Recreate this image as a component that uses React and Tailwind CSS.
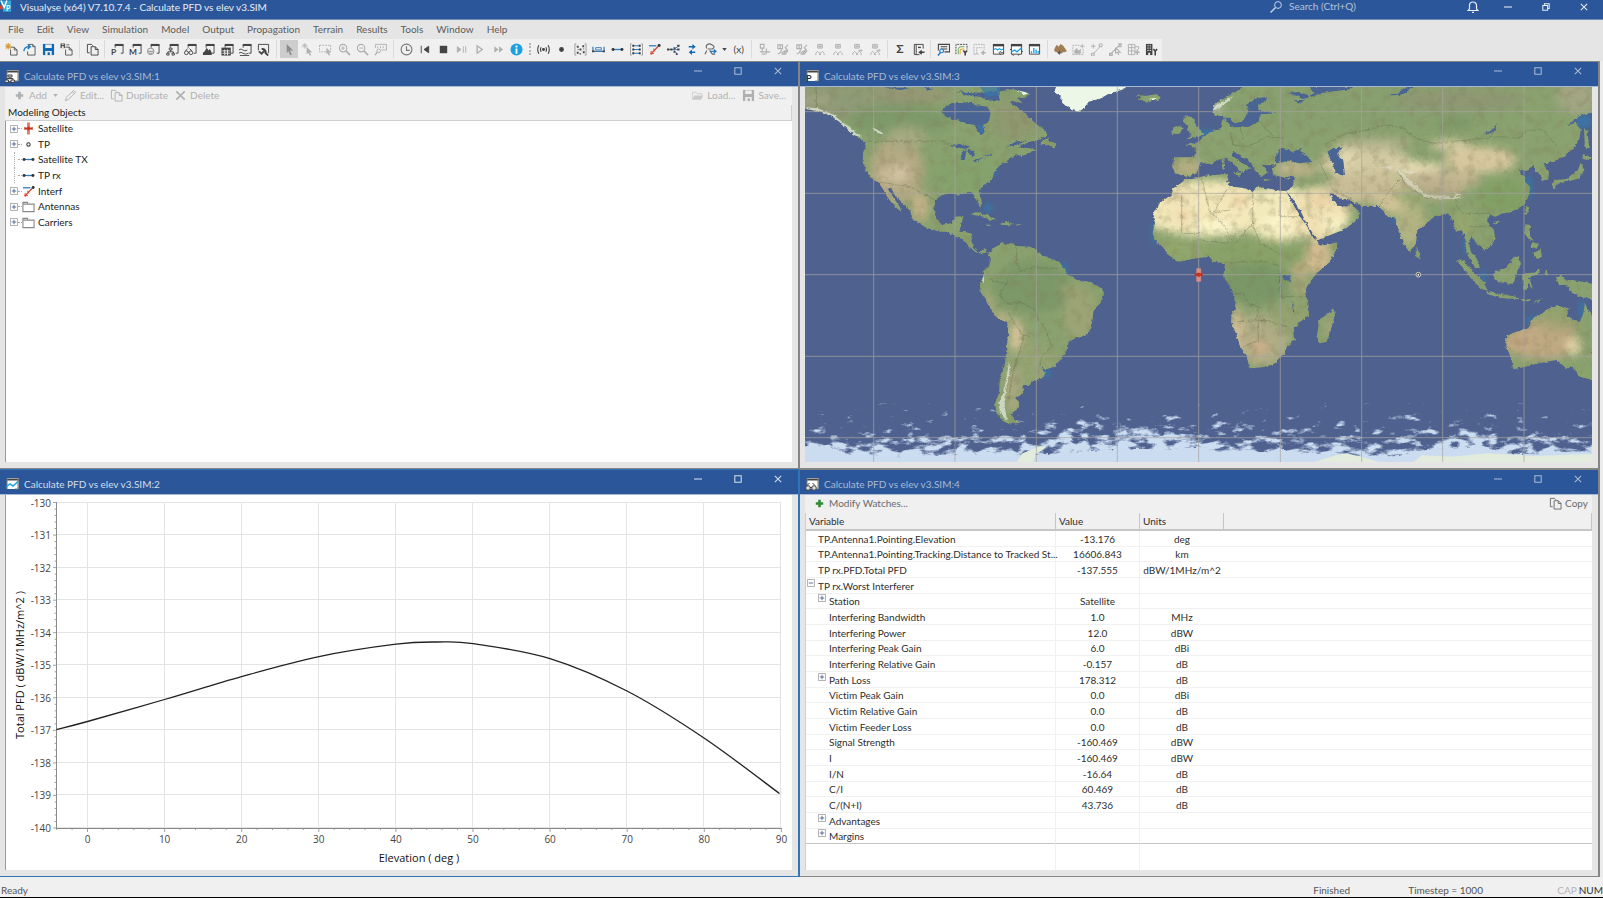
import React from "react";

const MENUS = [
  "File",
  "Edit",
  "View",
  "Simulation",
  "Model",
  "Output",
  "Propagation",
  "Terrain",
  "Results",
  "Tools",
  "Window",
  "Help",
];

/* ---------- Icons (14 x 14 grid) ---------- */

const frame = (
  <>
    <path d="M4.5 5V2.5h8.5v8.5h-2.5" fill="none" stroke="currentColor" />
    <path d="M4 1h9.5v2.2H4z" fill="currentColor" />
  </>
);

const fullFrame = (
  <>
    <path d="M1.5 2.5h11v9.5h-11z" fill="#fff" stroke="#444" />
    <path d="M1 1h12v2.6H1z" fill="#444" />
  </>
);

const people = (
  <g fill="none" stroke="currentColor">
    <path d="M5 1.5h5v4H5zM7.5 1.5v4M5 3.5h5" />
    <path d="M3 13v-2l2-2 2 2v2M8 13v-2l2-2 2 2v2" />
  </g>
);

const satPair = (
  <g fill="none" stroke="currentColor" strokeWidth="1.2">
    <path d="M2 2h5v4H2zM4.500 2v4" />
    <path d="M2 12l3-2 1-3M6 11l4-3M13 2l-3 3 2 2-4 5M13 8l-3 4H6" />
  </g>
);

const pages = (
  <g fill="none" stroke="currentColor">
    <path d="M4 10.500H1.500v-9h4.500l1.500 1.500" />
    <path d="M5.500 4h4.500l3 3v6h-7.500zM10 4v3h3" />
  </g>
);

const floppy = (
  <>
    <path d="M1 1h12v12H1z" fill="currentColor" />
    <path d="M3.500 1.500h7v4h-7zM3.500 8.500h7V13h-7z" fill="#f0f0f0" />
    <path d="M6 10h2.500v3H6z" fill="currentColor" />
  </>
);

const magnifier = (
  <>
    <circle cx="5.500" cy="5.500" r="4" fill="none" stroke="currentColor" strokeWidth="1.2" />
    <path d="M8.500 8.500L13 13" stroke="currentColor" strokeWidth="1.800" />
    <path d="M3.500 5.500h4" stroke="currentColor" />
  </>
);

const ICONS = {
  newFile: (
    <>
      <path d="M6 4.500h4l3 3V13H6V7M10 4.500v3h3" fill="none" stroke="#555" />
      <path d="M3.500 0v7M0 3.500h7M1 1l5 5M6 1L1 6" stroke="#d99a35" strokeWidth="1.100" />
    </>
  ),
  open: (
    <>
      <path d="M6 5.500V1.500h4.500l2.500 2.500v9H5V9M10.500 1.500V4H13" fill="none" stroke="#555" />
      <path d="M1 9C1 5 3 4 7 4M5 1.500L8 4 5 6.500" fill="none" stroke="#1f7bc4" strokeWidth="1.400" />
    </>
  ),
  save: <g className="text-[#0f68b4]">{floppy}</g>,
  saveAs: (
    <>
      <path d="M6 4.500h4l3 3V13H6V7M10 4.500v3h3" fill="none" stroke="#555" />
      <path d="M.5.5h5v5h-5z" fill="#555" />
      <path d="M2 3.500h2v2H2zM2 1h2v1H2z" fill="#f0f0f0" />
      <path d="M7 2h3" stroke="#555" />
    </>
  ),
  copy: pages,
  winP: (
    <>
      {frame}
      <text x="0" y="13" fontSize="9" fontWeight="bold" fill="currentColor">P</text>
    </>
  ),
  winM: (
    <>
      {frame}
      <text x="0" y="13" fontSize="9" fontWeight="bold" fill="currentColor">M</text>
    </>
  ),
  winGlobe: (
    <>
      {frame}
      <circle cx="4" cy="9" r="3.500" fill="#f0f0f0" stroke="#888" />
      <path d="M1 9h6M2 11h4" stroke="#888" />
    </>
  ),
  winTree: (
    <>
      {frame}
      <path d="M3.500 5.500h3v2h-3zM.8 11h2.500v2H.8zM6.500 11h2.500v2H6.500zM5 7.500v2M2 11V9.500h6V11" fill="none" stroke="currentColor" />
    </>
  ),
  winWatch: (
    <>
      {frame}
      <circle cx="2.500" cy="10.500" r="2" fill="none" stroke="currentColor" />
      <circle cx="7.500" cy="10.500" r="2" fill="none" stroke="currentColor" />
      <path d="M1.500 8.500L4 6M8.500 8.500L6 6M4.500 10h1" stroke="currentColor" />
    </>
  ),
  winTerrain: (
    <>
      {frame}
      <path d="M1 13V10.500l2-1.500 2-4 2 3 1.500-1.500 2 4V13z" fill="currentColor" />
    </>
  ),
  winTable: (
    <>
      {frame}
      <path d="M.5 5h10v8.500H.5z" fill="currentColor" />
      <path d="M1.500 8.500h8M1.500 11h8M4 7v6M7 7v6" stroke="#f0f0f0" />
    </>
  ),
  winWave: (
    <>
      {frame}
      <path d="M0 7.500c3-3 5 3 9 0M0 11c3-3 5 3 10 0M1 13.500h10" fill="none" stroke="currentColor" />
    </>
  ),
  winTool: (
    <>
      <path d="M1.500 8V1.500h11v9h-1" fill="none" stroke="currentColor" />
      <path d="M5 6.500c3-.5 5 2 4 4l3 3M2 9l3 2.500L9 7" fill="none" stroke="currentColor" strokeWidth="2" />
    </>
  ),
  pointer: <path d="M4 1l7 7H7.500l2 4.500-1.700.700L6 8.800 4 10.800z" fill="currentColor" />,
  pointerNew: (
    <>
      <path d="M6 4l6 6H9.500l1.500 3-1.500.700L8 10.500 6 12z" fill="currentColor" />
      <path d="M4 0v6M1 3h6M2 1l4 4M6 1L2 5" stroke="currentColor" strokeWidth=".8" />
    </>
  ),
  marquee: (
    <>
      <path d="M.5 2.500h12v7H.5z" fill="none" stroke="currentColor" strokeDasharray="2 1" />
      <path d="M8 5l5 5h-2l1 3-1.500.500L9.500 11 8 12z" fill="currentColor" />
    </>
  ),
  zoomIn: (
    <>
      {magnifier}
      <path d="M5.500 3.500v4" stroke="currentColor" />
    </>
  ),
  zoomOut: magnifier,
  measure: (
    <>
      <path d="M1.500 1.500h12v6H8M1.500 1.500v4M4 3.500v2M7 3.500v2M10 3.500v2" fill="none" stroke="currentColor" />
      <circle cx="5" cy="8.500" r="2" fill="none" stroke="currentColor" />
      <path d="M3.500 10L1 13" stroke="currentColor" strokeWidth="1.500" />
    </>
  ),
  clock: (
    <>
      <circle cx="7" cy="7" r="5.800" fill="none" stroke="#777" strokeWidth="1.200" />
      <path d="M7 3.500V8h3.500" fill="none" stroke="#777" strokeWidth="1.200" />
    </>
  ),
  rewind: <path d="M3.500 3v8M11.500 3.500v7L6.500 7z" fill="currentColor" stroke="currentColor" />,
  stop: <path d="M3 3h8v8H3z" fill="currentColor" />,
  step: <path d="M2.500 4v6L6.500 7zM9 3.500v7M11.500 3.500v7" fill="currentColor" stroke="currentColor" />,
  play: <path d="M4.500 3v8L10 7z" fill="none" stroke="currentColor" strokeWidth="1.500" />,
  fast: <path d="M2.500 3.500v7l4.500-3.500zM7.500 3.500v7l4.500-3.500z" fill="currentColor" />,
  info: (
    <>
      <circle cx="7" cy="7" r="6.500" fill="#1ba1e2" />
      <path d="M6 5.800h2v5.700H6zM6 2.800h2v2H6z" fill="#fff" />
    </>
  ),
  antenna: (
    <g fill="none" stroke="currentColor" strokeWidth="1.200">
      <circle cx="7" cy="7" r="1" fill="currentColor" />
      <path d="M4.500 4.500q-1.500 2.500 0 5M9.500 4.500q1.500 2.500 0 5M2 2.500q-2.500 4.500 0 9M12 2.500q2.500 4.500 0 9" />
    </g>
  ),
  dot: <circle cx="7" cy="7" r="2.600" fill="currentColor" />,
  dots: (
    <>
      <path d="M2.500 1H1v12h1.500M11.500 1H13v12h-1.500" fill="none" stroke="#999" />
      <path d="M3 3h2v2H3zM9 2.500h2v2H9zM6 6h2v2H6zM3 9.500h2v2H3zM9.500 9h2v2h-2zM6 11h1.500v1.500H6zM10 6h1v1h-1zM4 6.500h1v1H4z" fill="currentColor" />
    </>
  ),
  group: (
    <>
      <path d="M1 4v5h12V4" fill="none" stroke="#3c78b4" strokeWidth="1.300" />
      <path d="M4 5h6v2.500H4z" fill="none" stroke="#3c78b4" />
      <path d="M0 8h2.500v2H0zM11.500 8H14v2h-2.500z" fill="currentColor" />
    </>
  ),
  link: (
    <>
      <path d="M2 7h10" stroke="#2f7cc0" strokeWidth="1.400" />
      <circle cx="2.200" cy="7" r="1.600" fill="#333" />
      <circle cx="11.800" cy="7" r="1.600" fill="#333" />
    </>
  ),
  links: (
    <>
      <path d="M2 1H.5v12H2M12 1h1.500v12H12" fill="none" stroke="#999" />
      <path d="M4 3h6M4 7h6M4 11h6" stroke="#2f7cc0" strokeWidth="1.200" />
      <path d="M2.500 2h2v2h-2zM2.500 6h2v2h-2zM2.500 10h2v2h-2zM9.500 2h2v2h-2zM9.500 6h2v2h-2zM9.500 10h2v2h-2z" fill="#333" />
    </>
  ),
  interf: (
    <>
      <path d="M1 3h8" stroke="#2f7cc0" strokeWidth="1.400" />
      <path d="M3 12l8-8.500" stroke="#d8412a" strokeWidth="1.300" />
      <path d="M3.500 8.500L3 12l3.500-1M6 6l1 3" fill="none" stroke="#d8412a" />
      <circle cx="12" cy="2.800" r="1.600" fill="#333" />
    </>
  ),
  network: (
    <>
      <path d="M1 7h6l6-4M7 7h6M7 7l4 5" fill="none" stroke="#3c78b4" />
      <path d="M0 6h2.500v2H0zM3.500 6H6v2H3.500zM7 4.500h2v2H7zM11 2h2.500v2H11zM11 6h2.500v2H11zM7 8.500h2v2H7zM9.500 11h2v2h-2z" fill="currentColor" />
    </>
  ),
  updown: (
    <path d="M4 3.200h4V1l3.500 3L8 7V4.800H4zM11 10.800H7.500V13L4 10l3.500-3v2.200H11z" fill="#0f68b4" />
  ),
  orbit: (
    <>
      <path d="M3 6C1 2 5 0 8 1.500s4 3 1 5H4M3 8l-2 4M6 8l3 4h3" fill="none" stroke="#666" strokeWidth="1.200" />
      <path d="M7 9h5.500M10.500 7L13 9l-2.500 2" fill="none" stroke="#1f7bc4" strokeWidth="1.200" />
    </>
  ),
  satAdd: (
    <g fill="none" stroke="currentColor" strokeWidth="1.200">
      <path d="M2.500 1.500h4v4h-4zM4.500 6v3M2 9.500h5M9 6v6M6 9.500h7M4 12h4" />
    </g>
  ),
  satPair,
  people,
  peopleRight: (
    <>
      {people}
      <path d="M9 8h4M11.500 6.500L13 8l-1.500 1.500" fill="none" stroke="currentColor" />
    </>
  ),
  notebook: (
    <>
      <path d="M12 6V1.500H2.500v11H8M4.500 1.500v11" fill="none" stroke="currentColor" />
      <path d="M6.500 4h3v1.500h-3z" fill="currentColor" />
      <path d="M13.500 10H8.500M10.500 8l-2.500 2 2.500 2" fill="none" stroke="currentColor" strokeWidth="1.500" />
    </>
  ),
  inspect: (
    <>
      <path d="M1.500 8V1.500h12v8H8M4 4h7M4 6.500h7" fill="none" stroke="currentColor" strokeWidth="1.200" />
      <circle cx="5" cy="8.500" r="2" fill="#f0f0f0" stroke="#1f7bc4" strokeWidth="1.200" />
      <path d="M4 10l-3 3.500" stroke="#1f7bc4" strokeWidth="1.500" />
    </>
  ),
  contour: (
    <>
      <path d="M1 12V1.500h12V7" fill="none" stroke="currentColor" strokeDasharray="2 1" />
      <path d="M3.500 12V7q0-3 3-3H10" fill="none" stroke="#6aa84f" />
      <path d="M5.500 12V8.500q0-2 2-2H10" fill="none" stroke="#e8b93c" strokeWidth="1.300" />
      <path d="M9 8l2 2.500L13 8M11 10v3.500" fill="none" stroke="currentColor" strokeWidth="1.700" />
    </>
  ),
  regionAdd: (
    <>
      <path d="M1 12V1.500h11V8M1 12h6M4 12V5h6" fill="none" stroke="currentColor" strokeDasharray="2 1" />
      <path d="M11 8v5M8.500 10.500h5" stroke="currentColor" strokeWidth="1.500" />
    </>
  ),
  chartWave: (
    <>
      {fullFrame}
      <path d="M2 7l2-1 2 1.500L8 6l2 1.500 2-1" fill="none" stroke="#1ba1e2" strokeWidth="1.200" />
      <path d="M9 10.500h4M9.500 12.500l-2-2 2-2" fill="none" stroke="#444" />
    </>
  ),
  chartLine: (
    <>
      {fullFrame}
      <path d="M1.500 9.500L5 7.500l2.500 2L12.500 5" fill="none" stroke="#1ba1e2" strokeWidth="1.400" />
      <path d="M0 7h2M12 9h2M2 12l2 1.500M10 12l-1 1.500" stroke="#444" />
    </>
  ),
  chartBars: (
    <>
      {fullFrame}
      <path d="M3 11V9h1.500v2zM5.500 11V5.500H7V11zM8 11V7h1.500v4zM10.300 11V8.500h1.400V11z" fill="#1ba1e2" />
    </>
  ),
  trees: (
    <>
      <path d="M0 8l1-3 2-3 2 2 2-3 3 2 2 3 2 3-3 1H2z" fill="#a17f56" />
      <path d="M6 8v3M9 10.500H5M6.500 9L4.500 10.500l2 1.500" fill="none" stroke="#555" strokeWidth="1.300" />
    </>
  ),
  terrainAdd: (
    <>
      <path d="M1 12.500V2.500h8M1 12.500h11V7" fill="none" stroke="currentColor" strokeDasharray="2 1" />
      <path d="M3 11V8.500L5 6l2 3 2-2v4zM11 1v5M8.500 3.500h5" fill="currentColor" stroke="currentColor" />
    </>
  ),
  pathAdd: <path d="M3.500 1v5M1 3.500h5M3 12.500L11.500 3M1.500 11h3v3h-3zM10 1h3v3h-3z" fill="none" stroke="currentColor" />,
  pathPick: <path d="M1 12.500L12 1.500M10 1h3v3h-3M.5 11h3v2.500h-3zM7 5l5 5H9.500l1 3M7 5v6l2-1" fill="none" stroke="currentColor" strokeWidth="1.200" />,
  buildingAdd: (
    <>
      <path d="M1.500 1.500h7v11h-7zM5 1.500v11M1.500 5h7M1.500 8.500h7M8.500 4h4v3" fill="none" stroke="currentColor" />
      <path d="M11 7v6M8.500 10h5" stroke="currentColor" strokeWidth="1.500" />
    </>
  ),
  building: (
    <>
      <path d="M1 1h7v12H1z" fill="currentColor" />
      <path d="M2.500 3h4M2.500 5.500h4M2.500 8h4" stroke="#f0f0f0" strokeDasharray="1.500 1" />
      <path d="M3.500 10.500h2V13h-2z" fill="#f0f0f0" />
      <path d="M9 6.500L11 9l2-2.500M11 9v4.500" fill="none" stroke="currentColor" strokeWidth="1.700" />
    </>
  ),
  plus: <path d="M7 3v8M3 7h8" stroke="currentColor" strokeWidth="2.800" />,
  pencil: <path d="M1.500 12.500l1-3.500 8-7.500 2 2-8 8zM9 3l2 2" fill="none" stroke="currentColor" />,
  cross: <path d="M2.500 2.500l9 9M11.500 2.500l-9 9" stroke="currentColor" strokeWidth="1.800" />,
  folder: (
    <>
      <path d="M1.500 11V3.500h4l1 1.500h5v2" fill="none" stroke="currentColor" opacity=".5" />
      <path d="M1.500 11.500l2-4.500h9.500l-2 4.500z" fill="currentColor" opacity=".6" />
    </>
  ),
  floppy,
  satellite: (
    <>
      <path d="M5.500.5h3v13h-3z" fill="#e07a66" />
      <path d="M3 6h8v2H3zM6 5h2v4H6z" fill="#c8321c" />
      <path d="M3 5.500v3M11 5.500v3" stroke="#c8321c" />
    </>
  ),
  ring: <circle cx="7" cy="7" r="1.800" fill="none" stroke="#333" strokeWidth="1.100" />,
  treeFolder: <path d="M1 12.500V2.500h5v2h7v8zM1 4.500h5" fill="none" stroke="#8a8a8a" strokeWidth="1.200" />,
};

const Icon = ({ name, className = "" }) => (
  <svg viewBox="0 0 14 14" className={`h-[13px] w-[13px] shrink-0 ${className}`} aria-hidden="true">
    {ICONS[name]}
  </svg>
);

/* ---------- Main tool bar ---------- */

const TOOLS = [
  { width: "w-[74px]", items: ["newFile", "open", "save", "saveAs"] },
  { width: "w-[18px]", items: ["copy"] },
  {
    width: "w-[165px]",
    items: ["winP", "winM", "winGlobe", "winTree", "winWatch", "winTerrain", "winTable", "winWave", "winTool"],
  },
  {
    width: "w-[110px]",
    dim: true,
    items: ["pointer", "pointerNew", "marquee", "zoomIn", "zoomOut", "measure"],
  },
  { width: "w-[129px]", items: ["clock", "rewind", "stop", "step", "play", "fast", "info"] },
  {
    width: "w-[214px]",
    grip: true,
    items: ["antenna", "dot", "dots", "group", "link", "links", "interf", "network", "updown", "orbit", "caret", "(x)"],
  },
  {
    width: "w-[129px]",
    dim: true,
    items: ["satAdd", "satPair", "satPair", "people", "people", "peopleRight", "peopleRight"],
  },
  { width: "w-[36px]", items: ["Σ", "notebook"] },
  {
    width: "w-[110px]",
    items: ["inspect", "contour", "regionAdd", "chartWave", "chartLine", "chartBars"],
  },
  {
    width: "w-[110px]",
    items: ["trees", "terrainAdd", "pathAdd", "pathPick", "buildingAdd", "building"],
  },
];

const DISABLED = ["step", "play", "fast", "regionAdd", "terrainAdd", "pathAdd", "pathPick", "buildingAdd"];

const ToolButton = ({ name, dim }) => {
  const isText = !ICONS[name] && name !== "caret";
  const off = dim || DISABLED.includes(name);
  const tone = off ? "text-[#b0b0b0]" : "text-[#444]";

  return (
    <button
      aria-label={name}
      className={`flex h-[18px] items-center justify-center ${name === "caret" ? "w-[10px]" : "flex-1"} ${
        name === "pointer" ? "bg-[#cdcdcd] text-[#8c8c8c]" : tone
      }`}
    >
      {name === "caret" && <Caret />}
      {isText && <span className={name === "Σ" ? "text-xs font-bold" : "text-[10px]"}>{name}</span>}
      {ICONS[name] && <Icon name={name} />}
    </button>
  );
};

const Caret = () => (
  <svg viewBox="0 0 6 4" className="h-[3px] w-[5px]" aria-hidden="true">
    <path d="M0 0h6L3 4z" fill="currentColor" />
  </svg>
);

const ToolBar = () => (
  <div className="flex h-[22px] shrink-0 bg-[#e5e5e5]">
    <div className="flex items-center bg-[#f0f0f0] pb-[2px] pl-0.5 pr-px">
      {TOOLS.map((group, i) => (
        <React.Fragment key={i}>
          {i > 0 && (
            <span
              className={
                group.grip
                  ? "mx-[3px] h-3 border-l-2 border-dotted border-[#b5b5b5]"
                  : "mx-[3px] h-[18px] w-px bg-[#dadada]"
              }
            />
          )}
          <div className={`flex ${group.width}`}>
            {group.items.map((name, j) => (
              <ToolButton key={j} name={name} dim={group.dim} />
            ))}
          </div>
        </React.Fragment>
      ))}
    </div>
  </div>
);

/* ---------- Window chrome ---------- */

const WinGlyph = ({ kind }) => (
  <svg viewBox="0 0 10 10" className="h-2 w-2" fill="none" stroke="currentColor" strokeWidth="1.300" aria-hidden="true">
    {kind === "min" && <path d="M0 5h10" />}
    {kind === "max" && <path d="M1 1h8v8H1z" />}
    {kind === "restore" && <path d="M1 3h6v6H1zM3 3V1h6v6H7" />}
    {kind === "close" && <path d="M1 1l8 8M9 1L1 9" />}
  </svg>
);

const TitleBar = () => (
  <header className="flex h-5 shrink-0 items-start border-b border-[#6f8cb8] bg-[#2b579a] text-[#e8edf5]">
    <svg viewBox="0 0 14 14" className="h-[13px] w-3 shrink-0" aria-hidden="true">
      <path d="M0 0h13v13H4z" fill="#35a7dc" />
      <path d="M1 0l4 8 3-8" fill="none" stroke="#fff" strokeWidth="1.600" />
      <path d="M0 6h3v4H0z" fill="#d8412a" />
      <text x="7" y="12" fontSize="8" fontWeight="bold" fill="#fff">P</text>
    </svg>
    <h1 className="pl-2 text-[10px] leading-[15px]">Visualyse (x64) V7.10.7.4 - Calculate PFD vs elev v3.SIM</h1>
    <label className="ml-auto flex h-[13px] items-center gap-[7px] text-[#c5d0e3]">
      <svg viewBox="0 0 12 12" className="h-3 w-3" fill="none" stroke="currentColor" aria-hidden="true">
        <circle cx="8" cy="4" r="3.400" />
        <path d="M5.500 6.500L.5 11.500" strokeWidth="1.500" />
      </svg>
      <input
        type="text"
        aria-label="Search"
        placeholder="Search (Ctrl+Q)"
        className="w-[168px] bg-transparent text-[10px] leading-[13px] outline-none placeholder:text-[#b5c3dc]"
      />
    </label>
    <button aria-label="Notifications" className="flex h-[13px] w-8 items-center justify-center">
      <svg viewBox="0 0 12 12" className="h-3 w-3" fill="none" stroke="currentColor" strokeWidth="1.200" aria-hidden="true">
        <path d="M1 9.500h10L9.500 8V4.500a3.500 3.500 0 0 0-7 0V8zM5 11.300h2" />
      </svg>
    </button>
    {["min", "restore", "close"].map((kind) => (
      <button key={kind} aria-label={kind} className="flex h-[13px] w-[38px] items-center justify-center">
        <WinGlyph kind={kind} />
      </button>
    ))}
  </header>
);

const ChildWindow = ({ title, icon, active, children }) => (
  <section
    className={`flex min-h-0 min-w-0 flex-col border-y border-r-2 bg-[#e5e5e5] ${
      active ? "border-[#3274b8]" : "border-[#858585]"
    }`}
  >
    <div
      className={`flex h-[25px] shrink-0 items-center border-b border-[#a9b9d3] bg-[#2b579a] pl-[5px] ${
        active ? "text-[#d5deec]" : "text-[#aab9d2]"
      }`}
    >
      <svg viewBox="0 0 14 14" className="mt-1 h-[14px] w-[14px]" aria-hidden="true">
        <path d="M2 1h11.500v11H2z" fill="#fff" />
        <path d="M2 1.500h11.500v2H2z" fill="#444" />
        <path d="M2 1.500v11M13 1.500v10.500h-3" fill="none" stroke="#777" />
        {icon}
      </svg>
      <h2 className="grow pl-[5px] pt-[5px] text-[10px] leading-[15px]">{title}</h2>
      <div className="flex self-start">
        {["min", "max", "close"].map((kind) => (
          <button key={kind} aria-label={kind} className="flex h-[18px] w-10 items-center justify-center">
            <WinGlyph kind={kind} />
          </button>
        ))}
      </div>
    </div>
    <div className="mb-[6px] ml-[5px] mr-[6px] flex min-h-0 grow flex-col">{children}</div>
  </section>
);

const PanelButton = ({ icon, iconClass = "", children }) => (
  <button className="flex items-center gap-[3px]">
    <Icon name={icon} className={iconClass} />
    {children}
  </button>
);

/* ---------- Window 1: model tree ---------- */

const TREE = [
  { label: "Satellite", icon: "satellite", open: true },
  { label: "TP", icon: "ring", open: true },
  { label: "Satellite TX", icon: "link" },
  { label: "TP rx", icon: "link" },
  { label: "Interf", icon: "interf", open: true },
  { label: "Antennas", icon: "treeFolder", open: true },
  { label: "Carriers", icon: "treeFolder", open: true },
];

const Expander = ({ minus }) => (
  <svg viewBox="0 0 9 9" className="h-2 w-2 shrink-0" fill="none" aria-hidden="true">
    <path d="M.5.500h8v8h-8z" fill="#fff" stroke="#a5a5a5" />
    <path d={minus ? "M2 4.500h5" : "M2 4.500h5M4.500 2v5"} stroke="#4a5f8f" />
  </svg>
);

const ModelTree = () => (
  <>
    <div className="flex h-[18px] shrink-0 items-center bg-[#f0f0f0] pb-[2px] pl-2 pr-[6px] text-[10px] text-[#b0b0b0]">
      <PanelButton icon="plus">Add</PanelButton>
      <button aria-label="Add options" className="px-[6px]">
        <Caret />
      </button>
      <PanelButton icon="pencil">Edit...</PanelButton>
      <div className="flex grow gap-[6px] pl-[6px]">
        <PanelButton icon="copy">Duplicate</PanelButton>
        <PanelButton icon="cross">Delete</PanelButton>
      </div>
      <div className="flex gap-[7px]">
        <PanelButton icon="folder">Load...</PanelButton>
        <PanelButton icon="floppy">Save...</PanelButton>
      </div>
    </div>
    <h3 className="h-4 shrink-0 border-b border-r border-[#cfcfcf] bg-[#f0f0f0] pl-[3px] text-[10px] leading-[14px] text-[#222]">
      Modeling Objects
    </h3>
    <div className="grow border-l border-[#9a9a9a] bg-white">
      <ul className="grid h-[109px] grid-rows-7 pl-1 text-[10px] text-[#222]">
        {TREE.map((node) => (
          <li key={node.label} className="flex items-center">
            <span className="flex w-2 justify-center self-stretch">
              {node.open ? (
                <span className="self-center">
                  <Expander />
                </span>
              ) : (
                <span className="border-l border-dotted border-[#aaa]" />
              )}
            </span>
            <span className="w-1 border-t border-dotted border-[#aaa]" />
            <Icon name={node.icon} />
            <span className="pl-[3px]">{node.label}</span>
          </li>
        ))}
      </ul>
    </div>
  </>
);

/* ---------- Window 2: PFD chart ---------- */

const X0 = 87.5;
const XSTEP = 77.1;
const YTOP = 502.5;
const YSTEP = 32.55;

const CURVE = [
  [56.5, 729.5],
  [87.5, 721.5],
  [164.5, 699.5],
  [241.5, 676.6],
  [319, 656.6],
  [396, 644.2],
  [437, 642],
  [473, 643.6],
  [550, 658.6],
  [627, 691],
  [704, 738],
  [779.5, 793.5],
];

/** Catmull-Rom spline through the samples, written as cubic beziers. */
const spline = (points) =>
  points.slice(0, -1).reduce((d, p1, i) => {
    const p0 = points[i - 1] || p1;
    const p2 = points[i + 1];
    const p3 = points[i + 2] || p2;
    const c1 = [p1[0] + (p2[0] - p0[0]) / 6, p1[1] + (p2[1] - p0[1]) / 6];
    const c2 = [p2[0] - (p3[0] - p1[0]) / 6, p2[1] - (p3[1] - p1[1]) / 6];
    return `${d}C${c1} ${c2} ${p2}`;
  }, `M${points[0]}`);

const range = (n) => Array.from({ length: n }, (_, i) => i);

const PfdChart = () => (
  <div className="min-h-0 grow border-l border-[#9a9a9a] bg-white font-['Open_Sans',sans-serif]">
    <svg viewBox="6 495 786 375" className="h-full w-full" role="img" aria-label="Total PFD against elevation">
      <g stroke="#e4e4e4">
        {range(11).map((i) => (
          <path key={i} d={`M57 ${Math.round(YTOP + i * YSTEP) - 0.5}H781.5`} />
        ))}
        {range(10).map((i) => (
          <path key={i} d={`M${Math.round(X0 + i * XSTEP) - 0.5} 502V828`} />
        ))}
      </g>
      <g stroke="#8a8a8a">
        <path d="M56.5 502V828.5H782" fill="none" />
        {range(51).map((i) => (
          <path key={i} d={`M${i % 5 ? 54.5 : 53} ${YTOP + (i * YSTEP) / 5}H56.5`} strokeWidth=".8" />
        ))}
        {range(48).map((i) => (
          <path key={i} d={`M${X0 + ((i - 2) * XSTEP) / 5} 828V${(i - 2) % 5 ? 830 : 832}`} strokeWidth=".8" />
        ))}
      </g>
      <g fontSize="10" fill="#444">
        {range(11).map((i) => (
          <text key={i} x="51" y={YTOP + i * YSTEP + 4} textAnchor="end">
            {-130 - i}
          </text>
        ))}
        {range(10).map((i) => (
          <text key={i} x={X0 + i * XSTEP} y="843" textAnchor="middle">
            {i * 10}
          </text>
        ))}
      </g>
      <g fontSize="11" fill="#111" textAnchor="middle">
        <text x="419" y="862">Elevation ( deg )</text>
        <text transform="translate(24 665) rotate(-90)">Total PFD ( dBW/1MHz/m^2 )</text>
      </g>
      <path d={spline(CURVE)} fill="none" stroke="#222" strokeWidth="1.300" />
    </svg>
  </div>
);

/* ---------- Window 3: world map (3 units per pixel) ---------- */

const AMERICAS =
  "M0 0H600L590 40 620 60 675 98 685 112 712 135 735 150 742 165 722 178 690 185 665 196 655 205 682 203 708 210 690 220 665 228 650 225 625 236 620 246 600 256 585 270 580 286 575 300 550 318 536 330 540 348 546 370 540 380 530 362 520 342 500 335 480 344 450 340 425 346 405 360 402 390 408 415 425 434 455 430 465 410 490 408 484 436 478 455 495 456 520 461 514 482 520 502 535 516 555 508 568 520 580 505 610 487 618 495 630 488 650 498 690 500 710 510 725 525 750 535 778 545 800 580 830 600 870 605 905 625 912 640 905 665 880 690 878 715 870 750 855 768 825 775 802 790 800 810 785 835 760 862 735 868 722 860 735 880 730 893 695 903 690 915 668 915 672 930 662 945 645 955 660 968 655 985 635 1000 640 1015 660 1028 640 1032 610 1025 590 1000 585 970 597 940 600 890 615 850 620 800 625 760 622 730 590 712 575 690 560 660 538 630 540 610 550 590 548 575 568 555 570 530 562 514 542 523 520 514 500 495 490 478 465 470 440 455 420 455 395 450 365 435 340 420 330 392 310 372 290 350 275 328 262 325 272 342 285 360 300 382 305 396 285 380 275 368 262 350 248 325 235 306 215 298 200 275 188 245 190 215 200 190 180 178 155 160 130 135 100 112 60 94 0 84z" +
  "M718 195L735 178 748 170 745 182 765 190 765 202 745 196z" +
  "M510 402L530 397 560 405 590 418 570 420 550 410zM600 432L615 424 640 432 612 437zM562 434H576V438H562zM650 433H662V437H650z" +
  "M592 35L640 28 690 42 672 55 650 52 668 70 635 62 610 68 600 50zM500 55L520 48 545 62 520 68 498 64z" +
  "M1005 45L1025 52 1015 58 1045 67 1080 58 1083 48 1070 43 1035 47z";

// Everything east of Greenwich; drawn with a 1200 unit shift.
const OLD_WORLD =
  "M-50 297L-20 297 15 287 80 282 84 295 78 305 100 320 135 325 155 335 170 320 200 325 240 332 258 333 280 375 300 410 322 440 335 470 352 483 358 497 390 493 412 487 410 505 390 545 350 580 320 620 315 640 325 670 327 705 300 725 282 745 285 780 262 795 255 820 225 850 200 860 150 865 140 830 120 800 110 765 93 725 95 705 108 685 103 650 85 610 70 590 75 550 40 545 25 530-10 535-65 545-100 520-115 497-135 480-142 460-135 430-142 405-125 375-110 360-85 345-80 325-55 308z" +
  "M400 683L405 705 395 740 380 785 360 790 350 770 355 745 355 720 375 708 390 695z" +
  "M38 90L40 75 90 45 120 28 150 0H1200V100L1165 100 1140 108 1100 135 1130 128 1142 150 1138 180 1120 205 1085 235 1050 248 1030 250 1047 275 1045 298 1025 303 1022 282 1005 272 1005 255 975 272 955 268 972 290 975 305 990 322 985 350 970 375 940 392 905 402 885 410 870 405 860 422 882 450 885 480 870 500 850 514 845 500 830 490 815 468 805 490 812 512 832 538 840 565 825 562 805 530 798 505 795 470 785 450 768 455 760 425 745 400 705 408 680 430 650 455 648 490 628 517 610 490 595 450 585 410 565 412 550 395 537 378 485 378 455 362 425 358 400 340 388 343 412 378 440 380 455 372 482 402 465 425 430 450 390 465 350 482 345 470 320 430 300 390 275 352 258 333 275 325 285 295 280 288 250 292 220 285 215 265 230 256 185 255 205 275 185 290 165 270 150 245 120 228 100 213 95 225 120 245 155 265 140 268 128 282 112 262 78 235 50 240 35 252 0 250-10 280-40 290-75 280-80 262-78 232-18 232-12 208-40 194-5 187 12 168 40 152 62 148 65 122 80 115 65 107 45 108z" +
  "M-45 108L-25 110-15 130 0 150 12 165-10 172-40 178-25 160-40 150-35 140-50 125zM-80 142L-60 135-52 145-60 160-85 165z" +
  "M1055 312L1065 300 1100 297 1120 280 1135 270 1140 250 1150 255 1150 275 1140 295 1100 305 1070 312 1062 328zM1148 222L1175 230 1160 240 1148 236zM1152 145L1162 150 1166 190 1170 205 1155 208z" +
  "M648 503L661 522 658 535 647 530zM878 426L900 423 890 436zM972 402L980 380 988 382 980 404z" +
  "M770 540L790 543 820 575 855 610 860 632 842 625 815 598 790 565zM858 634L900 642 948 650 960 658 900 654 862 642z" +
  "M885 572L910 570 945 530 958 532 963 550 950 580 940 612 890 606 882 590zM966 580L1000 578 1020 568 1018 580 985 592 990 600 998 624 985 612 980 630 970 628zM975 433L990 435 990 468 1002 482 985 476 974 460zM1000 520L1022 508 1026 530 1010 536zM996 486L1016 492 1010 506 992 500zM962 658L990 658 985 664 960 662zM1000 668L1028 654 1018 664z" +
  "M1068 590L1085 588 1100 602 1120 600 1180 612V658L1140 650 1112 637 1108 622 1075 612zM1035 575L1042 568 1040 590z" +
  "M920 765L985 745 1000 715 1028 700 1050 680 1080 678 1106 685 1100 708 1140 727 1150 700 1155 668 1165 695 1180 710V899L1140 890 1115 860 1100 866 1070 840 1020 848 970 862 940 868 935 840 920 800 918 785z" +
  "M65 238H74V250H65zM66 252H75V266H66zM98 276L124 278 118 288zM190 296L215 300 195 302zM258 296L270 292 264 300z";

const LAKES =
  "M430 85L450 72 485 68 510 66 530 76 562 80 572 100 566 125 548 135 555 155 545 165 530 152 525 135 495 130 465 118 440 112 425 100zM470 34L540 38 590 34 600 60 570 62 540 50 500 46zM450 200L480 190 510 200 495 206 470 202zM484 240L486 215 500 208 494 240zM504 210L528 214 518 232 508 222zM518 242L548 232 546 238 525 246zM552 228L576 222 574 228z" +
  "M620 200L650 184 680 183 652 194z" +
  "M375 22L400 26 380 32zM250 22L330 24 300 30z" +
  "M1285 108L1300 130 1325 126 1340 105 1345 95 1338 75 1370 55 1400 50 1400 62 1375 75 1375 92 1430 97 1380 106 1375 125 1345 140 1300 142 1278 125z" +
  "M1465 38L1500 36 1540 52 1560 40 1590 35 1650 28 1660 21 1530 21 1540 40 1500 70 1480 60 1520 60z" +
  "M1424 240L1440 208 1462 206 1475 216 1510 203 1500 215 1530 235 1536 246 1500 250 1465 242 1430 250z" +
  "M1582 215L1600 204 1628 203 1612 220 1618 232 1630 242 1635 285 1605 280 1600 255z" +
  "M1770 42L1790 42 1815 22 1840 21 1825 32 1800 45 1775 46zM2050 160L2072 154 2090 132 2086 150 2068 162z" +
  "M1438 590L1442 580 1436 650zM1448 588L1472 586 1470 602 1452 602zM1474 655L1480 697 1484 697z";

const BORDERS =
  "M200 184H425L480 205M235 306L330 320 405 360M49 21V90M568 598L620 612 630 575M620 612L598 640 620 672 660 665 705 690 715 720 735 745 755 800 725 830 720 860M625 700L650 740 670 765 690 770M650 500L650 545 660 575 700 560 735 565 775 565M670 765L660 810 640 870 625 960" +
  "M1145 345V460L1200 460M1205 290L1230 400 1290 390M1280 330L1240 400 1290 460M1358 335V430L1305 490M1440 332V410H1500M1358 430L1380 490 1440 520M1200 480L1280 490 1310 460M1275 550L1330 545 1400 545 1440 560M1285 645L1330 640 1350 675 1375 680 1370 720 1410 722M1310 725L1400 722 1460 740M1375 725V780L1330 800M1438 575L1445 650 1520 650" +
  "M1290 155L1300 195 1350 200 1400 170 1450 175M1320 140L1330 180M1380 125L1420 170M1560 250L1580 290 1600 330 1660 360M1580 190L1640 160 1700 150 1750 135 1810 145 1850 175 1900 190 2000 180 2100 170 2160 175 2180 150 2230 150 2270 200M1790 270L1820 320 1880 355 1960 350M1740 375L1770 330 1800 300M1960 350L1985 400 2030 400 2070 400M2010 440L2060 440";

const SNOW =
  "M20 82L60 86 100 104 130 128 160 152 190 174 160 164 120 136 90 110 50 96 20 94zM216 140L250 160 244 166 220 150zM548 580L553 596 549 610 545 600zM628 840L630 870 618 930 614 980 622 1022 600 1000 596 970 610 940 620 890zM1238 90L1250 74 1300 48 1290 60 1256 86z";

const HIGH_ASIA =
  "M1785 262L1830 300 1880 345 1960 350 1990 352 1960 358 1880 354 1820 310zM1800 268L1850 276 1830 284zM1960 336L1990 344 1970 348zM1740 262L1780 258 1770 268z";

// [x, y, rx, ry, colour]
const TERRAIN = [
  [150, 60, 200, 60, "#8f9a76"],
  [300, 120, 160, 50, "#7f9a6a"],
  [290, 270, 80, 100, "#b3a983"],
  [320, 170, 60, 30, "#a5aa80"],
  [300, 280, 28, 30, "#d2c3a2"],
  [255, 290, 24, 26, "#c9bb98"],
  [360, 380, 26, 46, "#c2b288"],
  [500, 280, 100, 80, "#85a26d"],
  [640, 120, 70, 60, "#8f9970"],
  [40, 60, 60, 14, "#a3a486"],
  [350, 45, 120, 20, "#979775"],
  [700, 620, 120, 80, "#7d9868"],
  [840, 700, 50, 80, "#9ca475"],
  [820, 630, 40, 20, "#98a272"],
  [650, 775, 20, 60, "#d8c49c"],
  [600, 715, 36, 12, "#c9b58e"],
  [565, 670, 10, 30, "#b9ab84"],
  [700, 850, 70, 60, "#94a372"],
  [640, 930, 24, 70, "#aaa880"],
  [1220, 385, 210, 85, "#f3e8ba"],
  [1440, 400, 110, 84, "#f3eabc"],
  [1150, 405, 20, 12, "#e8c298"],
  [1125, 345, 40, 16, "#e0cfa2"],
  [1320, 360, 30, 14, "#ecd0a2"],
  [1250, 440, 60, 20, "#fbf5cc"],
  [1440, 430, 50, 26, "#fbf4ca"],
  [1560, 400, 90, 80, "#f0e0b2"],
  [1600, 430, 40, 24, "#f7efc4"],
  [1560, 360, 20, 12, "#e8c49a"],
  [1140, 510, 90, 24, "#93a76c"],
  [1380, 520, 170, 32, "#88a267"],
  [1370, 610, 110, 60, "#7a9767"],
  [1555, 530, 40, 50, "#d2bb90"],
  [1500, 570, 30, 20, "#bfae84"],
  [1500, 620, 30, 30, "#a3a878"],
  [1380, 780, 90, 80, "#aeac84"],
  [1312, 750, 16, 70, "#d6bf9a"],
  [1380, 800, 30, 24, "#cbae8a"],
  [1470, 710, 60, 40, "#94a271"],
  [1585, 740, 10, 40, "#a9a67c"],
  [1160, 262, 50, 26, "#b4ae82"],
  [1490, 268, 70, 22, "#b9b088"],
  [1470, 260, 20, 10, "#d3c6a0"],
  [1700, 250, 140, 50, "#d3caa3"],
  [1640, 230, 30, 30, "#e0d6b0"],
  [1700, 325, 130, 46, "#c8bd96"],
  [1860, 265, 70, 20, "#ebe0b8"],
  [1920, 300, 120, 30, "#c2b691"],
  [2040, 240, 110, 40, "#d6c79e"],
  [1950, 195, 60, 14, "#dccfa8"],
  [1720, 190, 120, 16, "#b2b28c"],
  [1900, 335, 90, 24, "#b7ab88"],
  [2120, 350, 90, 50, "#82a066"],
  [1830, 430, 50, 70, "#b1b383"],
  [1770, 370, 40, 30, "#d0c398"],
  [1830, 345, 50, 12, "#94ab70"],
  [1990, 430, 30, 40, "#97a76f"],
  [1700, 80, 420, 60, "#88a070"],
  [1980, 60, 200, 30, "#8f9774"],
  [1960, 130, 60, 16, "#7b9866"],
  [2330, 50, 60, 50, "#a3a684"],
  [1240, 80, 24, 20, "#b9c0a4"],
  [2230, 780, 100, 60, "#bfa983"],
  [2150, 790, 40, 30, "#c6a883"],
  [2320, 800, 22, 26, "#e6d6a8"],
  [2280, 740, 60, 16, "#a9a378"],
  [2260, 700, 60, 12, "#98a470"],
  [2150, 855, 50, 10, "#8fa06c"],
  [2330, 890, 60, 14, "#8aa468"],
];

const WorldMap = () => (
  <div className="min-h-0 grow overflow-hidden bg-[#4f628f]">
    <svg viewBox="15 21 2361 1125" preserveAspectRatio="none" className="h-full w-full" role="img" aria-label="World map">
      <defs>
        <clipPath id="land">
          <path d={AMERICAS} />
          <path d={OLD_WORLD} transform="translate(1200 0)" />
        </clipPath>
        <filter id="soften" x="-50%" y="-50%" width="200%" height="200%" colorInterpolationFilters="sRGB">
          <feGaussianBlur stdDeviation="12" />
        </filter>
        <filter id="shelf" x="-50%" y="-50%" width="200%" height="200%">
          <feGaussianBlur stdDeviation="7" />
        </filter>
        <filter id="coast" x="0" y="0" width="100%" height="100%" colorInterpolationFilters="sRGB">
          <feTurbulence type="fractalNoise" baseFrequency=".09" numOctaves="3" seed="7" />
          <feDisplacementMap in="SourceGraphic" scale="11" xChannelSelector="R" yChannelSelector="G" />
        </filter>
        <filter id="relief" x="0" y="0" width="100%" height="100%">
          <feTurbulence type="fractalNoise" baseFrequency=".035" numOctaves="5" seed="4" />
          <feColorMatrix values="0 0 0 0 .22  0 0 0 0 .2  0 0 0 0 .1  3.500 0 0 0 -1.700" />
        </filter>
        <filter id="clouds" x="0" y="0" width="100%" height="100%">
          <feTurbulence type="fractalNoise" baseFrequency=".022 .045" numOctaves="5" seed="11" />
          <feColorMatrix values="0 0 0 0 0  0 0 0 0 0  0 0 0 0 0  1 0 0 0 0" result="noise" />
          <feComposite in="noise" in2="SourceGraphic" operator="arithmetic" k2=".6" k3=".4" />
          <feColorMatrix values="0 0 0 0 .6  0 0 0 0 .72  0 0 0 0 .88  0 0 0 8 -3.700" />
        </filter>
        <linearGradient id="south" x1="0" y1="0" x2="0" y2="1">
          <stop offset="0" stopOpacity="0" />
          <stop offset=".45" stopOpacity=".24" />
          <stop offset=".8" stopOpacity=".6" />
          <stop offset="1" stopOpacity="1" />
        </linearGradient>
        <radialGradient id="puff">
          <stop offset="0" stopOpacity=".45" />
          <stop offset="1" stopOpacity="0" />
        </radialGradient>
      </defs>

      <g filter="url(#shelf)" fill="#2f7fb0" opacity=".6">
        <ellipse cx="565" cy="385" rx="14" ry="12" />
        <ellipse cx="795" cy="565" rx="10" ry="20" />
        <ellipse cx="740" cy="880" rx="14" ry="12" />
        <ellipse cx="1062" cy="460" rx="6" ry="36" />
        <ellipse cx="1215" cy="160" rx="30" ry="12" />
        <ellipse cx="2185" cy="320" rx="12" ry="34" />
        <ellipse cx="2350" cy="125" rx="24" ry="20" />
        <ellipse cx="2200" cy="720" rx="22" ry="10" />
        <ellipse cx="2345" cy="690" rx="8" ry="30" />
        <ellipse cx="1998" cy="500" rx="7" ry="26" />
        <ellipse cx="2050" cy="590" rx="10" ry="16" />
        <ellipse cx="1785" cy="420" rx="7" ry="10" />
        <ellipse cx="580" cy="275" rx="10" ry="14" />
      </g>

      <g filter="url(#coast)">
        <path d="M0 0H2400V1147H0z" fill="none" />
        <g clipPath="url(#land)">
          <path d="M0 0H2400V1147H0z" fill="#8aa26f" />
          <g filter="url(#soften)">
            {TERRAIN.map(([cx, cy, rx, ry, fill], i) => (
              <ellipse key={i} cx={cx} cy={cy} rx={rx} ry={ry} fill={fill} />
            ))}
          </g>
          <path d="M0 0H2400V1147H0z" filter="url(#relief)" opacity=".26" />
          <path d={BORDERS} fill="none" stroke="#5a6348" strokeWidth="2" opacity=".5" />
          <path d={SNOW} fill="#e8eee2" opacity=".7" />
          <path d={HIGH_ASIA} fill="#e8e8da" opacity=".5" />
        </g>
        <path d={LAKES} fill="#4a6493" />
        <path d="M768 21L762 38 785 48 783 65 802 82 838 94 852 85 866 65 900 56 925 42 970 28 992 10H768z" fill="#edf7e7" />
        <path d="M648 30L690 40 672 44zM1045 56L1070 54 1062 62z" fill="#edf7e7" />
      </g>
      <path d="M540 21H600V45L560 50zM532 130L548 138 552 160 540 160z" fill="#3a77a8" opacity=".7" />

      <g filter="url(#clouds)">
        <path d="M0 970H2400V1147H0z" fill="url(#south)" />
        <ellipse cx="920" cy="1070" rx="240" ry="70" fill="url(#puff)" />
        <ellipse cx="1130" cy="1070" rx="160" ry="60" fill="url(#puff)" />
        <ellipse cx="1320" cy="1040" rx="60" ry="30" fill="url(#puff)" />
        <ellipse cx="1850" cy="1014" rx="50" ry="26" fill="url(#puff)" />
        <ellipse cx="2020" cy="1080" rx="110" ry="50" fill="url(#puff)" />
      </g>
      <path
        d="M0 1098L90 1102 150 1124 300 1132 480 1124 640 1130 800 1118 960 1106 1100 1108 1200 1100 1290 1126 1450 1110 1600 1128 1780 1130 1900 1106 2040 1098 2120 1120 2400 1128V1160H0z"
        fill="#ccdcf0"
        filter="url(#coast)"
      />
      <path d="M650 1147L668 1120 720 1098 738 1102 706 1124 700 1147zM1540 1147L1600 1128 1640 1120 1690 1132 1740 1147zM1840 1147L1866 1126 1960 1130 2060 1120 2200 1128 2378 1122V1147z" fill="#e3ecdc" />

      <g stroke="#a8a39f" strokeWidth="3" opacity=".7">
        {[221, 465, 709, 952, 1196, 1441, 1685, 1928, 2172].map((x) => (
          <path key={x} d={`M${x} 21V1147`} />
        ))}
        {[95, 340, 584, 829, 1073].map((y) => (
          <path key={y} d={`M15 ${y}H2378`} />
        ))}
      </g>

      <g>
        <path d="M1190 566h12v38h-12z" fill="#ea8a74" stroke="#f0b0a0" />
        <path d="M1184 580h24v8h-24zM1192 578h8v12h-8z" fill="#c8321c" />
      </g>
      <circle cx="1855" cy="584" r="7" fill="#333" stroke="#d8d8d8" strokeWidth="3" />
      <circle cx="1855" cy="584" r="3" fill="#fff" />
    </svg>
  </div>
);

/* ---------- Window 4: watch table ---------- */

const WATCHES = [
  { name: "TP.Antenna1.Pointing.Elevation", value: "-13.176", units: "deg", root: true },
  { name: "TP.Antenna1.Pointing.Tracking.Distance to Tracked St...", value: "16606.843", units: "km", root: true },
  { name: "TP rx.PFD.Total PFD", value: "-137.555", units: "dBW/1MHz/m^2", root: true },
  { name: "TP rx.Worst Interferer", root: true, box: "minus" },
  { name: "Station", value: "Satellite", box: "plus" },
  { name: "Interfering Bandwidth", value: "1.0", units: "MHz" },
  { name: "Interfering Power", value: "12.0", units: "dBW" },
  { name: "Interfering Peak Gain", value: "6.0", units: "dBi" },
  { name: "Interfering Relative Gain", value: "-0.157", units: "dB" },
  { name: "Path Loss", value: "178.312", units: "dB", box: "plus" },
  { name: "Victim Peak Gain", value: "0.0", units: "dBi" },
  { name: "Victim Relative Gain", value: "0.0", units: "dB" },
  { name: "Victim Feeder Loss", value: "0.0", units: "dB" },
  { name: "Signal Strength", value: "-160.469", units: "dBW" },
  { name: "I", value: "-160.469", units: "dBW" },
  { name: "I/N", value: "-16.64", units: "dB" },
  { name: "C/I", value: "60.469", units: "dB" },
  { name: "C/(N+I)", value: "43.736", units: "dB" },
  { name: "Advantages", box: "plus" },
  { name: "Margins", box: "plus" },
];

const WatchTable = () => (
  <>
    <div className="flex h-[18px] shrink-0 items-center justify-between bg-[#f0f0f0] pb-[2px] pl-2 pr-1 text-[10px] text-[#6a6a6a]">
      <PanelButton icon="plus" iconClass="text-[#2e8b32]">
        Modify Watches...
      </PanelButton>
      <PanelButton icon="copy">Copy</PanelButton>
    </div>
    <div className="min-h-0 grow border-l border-[#cfcfcf] bg-white">
      <table className="h-full w-full table-fixed border-separate border-spacing-0 text-[10px] leading-[14px] text-[#2e2e2e]">
        <colgroup>
          <col className="w-[250px]" />
          <col className="w-[84px]" />
          <col className="w-[84px]" />
          <col />
        </colgroup>
        <thead className="bg-[#f0f0f0] text-left">
          <tr className="h-[18px]">
            {["Variable", "Value", "Units", ""].map((head) => (
              <th key={head} className="border-b-2 border-r border-[#c6c6c6] p-0 pl-[3px] font-normal">
                {head}
              </th>
            ))}
          </tr>
        </thead>
        <tbody>
          {WATCHES.map((row, i) => {
            const line = i === WATCHES.length - 1 ? "border-b-[#c6c6c6]" : "border-b-[#f1f1f1]";
            const cell = `border-b p-0 ${line}`;

            return (
              <tr key={row.name} className={i % 3 === 1 ? "h-[15px]" : "h-4"}>
                <td className={`${cell} border-r border-r-[#f1f1f1]`}>
                  <div className={`flex ${row.root ? "pl-px" : "pl-3"}`}>
                    <span className="w-[11px] shrink-0">{row.box && <Expander minus={row.box === "minus"} />}</span>
                    <span className="whitespace-nowrap">{row.name}</span>
                  </div>
                </td>
                <td className={`${cell} border-r border-r-[#f1f1f1] text-center`}>{row.value}</td>
                <td className={`${cell} text-center`}>{row.units}</td>
                <td className={cell} />
              </tr>
            );
          })}
          <tr>
            <td className="border-r border-[#f1f1f1] p-0" />
            <td className="border-r border-[#f1f1f1] p-0" />
            <td className="p-0" />
            <td className="p-0" />
          </tr>
        </tbody>
      </table>
    </div>
  </>
);

/* ---------- Page ---------- */

const App = () => (
  <div className="flex h-screen flex-col overflow-hidden bg-[#e5e5e5] font-[Lato,sans-serif] text-[#555] [font-variant-ligatures:none]">
    <TitleBar />
    <nav className="flex h-[19px] shrink-0 items-center gap-[13px] pl-2 text-[10px] text-[#5c5c5c]">
      {MENUS.map((menu) => (
        <button key={menu}>{menu}</button>
      ))}
    </nav>
    <ToolBar />

    <main className="grid min-h-0 grow grid-cols-2 grid-rows-2 bg-[#ececec] pr-[3px]">
      <ChildWindow
        title="Calculate PFD vs elev v3.SIM:1"
        icon={<path d="M3 6h4v2H3zM0 11h3.500v2.500H0zM6 11h3.500v2.500H6zM5 8v2M2 11V9.500h6V11" fill="#ddd" stroke="#444" />}
      >
        <ModelTree />
      </ChildWindow>
      <ChildWindow
        title="Calculate PFD vs elev v3.SIM:3"
        icon={
          <text x="1" y="13" fontSize="9" fontWeight="bold" fill="#333">
            P
          </text>
        }
      >
        <WorldMap />
      </ChildWindow>
      <ChildWindow
        active
        title="Calculate PFD vs elev v3.SIM:2"
        icon={<path d="M1 10l4-3 3 2 5-4.500" fill="none" stroke="#1ba1e2" strokeWidth="1.500" />}
      >
        <PfdChart />
      </ChildWindow>
      <ChildWindow
        title="Calculate PFD vs elev v3.SIM:4"
        icon={
          <g fill="#ddd" stroke="#444">
            <circle cx="3" cy="11" r="2.300" />
            <circle cx="9" cy="11" r="2.300" />
            <path d="M2 8.500L4.500 6M10 8.500L7.500 6M5 10.500h2" />
          </g>
        }
      >
        <WatchTable />
      </ChildWindow>
    </main>

    <footer className="flex h-[21px] shrink-0 items-center border-b border-black bg-[#f0f0f0] pt-[5px] text-[10px] leading-[14px]">
      <span className="grow pl-px">Ready</span>
      <span className="w-[95px]">Finished</span>
      <span className="w-[149px]">Timestep = 1000</span>
      <span className="text-[#b5b5b5]">CAP</span>
      <span className="pl-[2px] text-[#333]">NUM</span>
    </footer>
  </div>
);

export default App;
